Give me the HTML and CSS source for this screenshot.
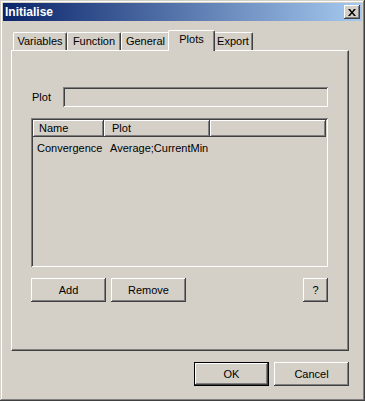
FILE: index.html
```html
<!DOCTYPE html>
<html lang="en">
<head>
  <meta charset="UTF-8" />
  <title>Initialise</title>
  <link rel="stylesheet" href="styles.css">
</head>
<body>
  <div class="window">
    <div class="titlebar">
      <span class="title">Initialise</span>
      <button class="close">
        <svg width="8" height="7" viewBox="0 0 8 7">
          <path d="M0 0h2l2 2.5L6 0h2L5 3.5 8 7H6L4 4.5 2 7H0l3-3.5z" fill="#000"/>
        </svg>
      </button>
    </div>

    <div class="tabs">
      <div class="tab tab-vars">Variables</div>
      <div class="tab tab-func">Function</div>
      <div class="tab tab-gen">General</div>
      <div class="tab tab-plots active">Plots</div>
      <div class="tab tab-export">Export</div>
    </div>

    <div class="panel">
      <div class="field-row">
        <label class="label">Plot</label>
        <div class="field"></div>
      </div>

      <div class="list">
        <div class="list-head">
          <div class="col col-name">Name</div>
          <div class="col col-plot">Plot</div>
          <div class="col col-rest"></div>
        </div>
        <div class="list-row">
          <span class="cell-name">Convergence</span>
          <span class="cell-plot">Average;CurrentMin</span>
        </div>
      </div>

      <div class="actions">
        <button class="btn">Add</button>
        <button class="btn">Remove</button>
        <button class="btn btn-help">?</button>
      </div>
    </div>

    <div class="footer">
      <button class="btn default">OK</button>
      <button class="btn">Cancel</button>
    </div>
  </div>
</body>
</html>
```

FILE: styles.css
```css
body {
  margin: 0;
  font-family: "Liberation Sans", Arial, sans-serif;
  font-size: 11px;
  color: #000;
  background-color: #d4d0c8;
}
.window {
  width: 365px;
  height: 401px;
  box-sizing: border-box;
  padding: 3px;
  background-color: #d4d0c8;
  box-shadow: inset -1px -1px #404040, inset 1px 1px #d4d0c8,
              inset -2px -2px #808080, inset 2px 2px #fff;
}
.titlebar {
  height: 18px;
  display: flex;
  align-items: center;
  justify-content: space-between;
  padding: 0 2px 0 2px;
  background: linear-gradient(to right, #0a246a, #a6caf0);
}
.title {
  color: #fff;
  font-weight: bold;
  font-size: 12px;
}
.close {
  width: 16px;
  height: 14px;
  padding: 0;
  border: none;
  background-color: #d4d0c8;
  display: flex;
  align-items: center;
  justify-content: center;
  box-shadow: inset -1px -1px #404040, inset 1px 1px #fff,
              inset -2px -2px #808080, inset 2px 2px #d4d0c8;
}
.tabs {
  display: flex;
  align-items: flex-end;
  height: 20px;
  margin: 9px 0 0 10px;
  position: relative;
  z-index: 1;
}
.tab {
  height: 17px;
  line-height: 17px;
  text-align: center;
  border-top: 1px solid #fff;
  border-left: 1px solid #fff;
  border-right: 1px solid #404040;
  border-radius: 2px 2px 0 0;
  box-shadow: inset -1px 0 #808080;
  box-sizing: content-box;
}
.tab-vars { width: 52px; }
.tab-func { width: 52px; }
.tab-gen { width: 47px; }
.tab-plots { width: 45px; }
.tab-export { width: 38px; }
.tab.active {
  height: 20px;
  line-height: 17px;
  margin: 0 -2px -1px -2px;
  background-color: #d4d0c8;
  position: relative;
}
.panel {
  margin-left: 8px;
  width: 338px;
  height: 301px;
  box-sizing: border-box;
  padding: 36px 20px 0 19px;
  border-top: 1px solid #fff;
  border-left: 1px solid #fff;
  border-right: 1px solid #404040;
  border-bottom: 1px solid #404040;
  box-shadow: inset -1px -1px #808080;
}
.field-row {
  display: flex;
  align-items: center;
}
.label {
  width: 31px;
  padding-left: 1px;
}
.field {
  flex: 1;
  height: 20px;
  box-shadow: inset 1px 1px #808080, inset -1px -1px #fff,
              inset 2px 2px #404040, inset -2px -2px #d4d0c8;
}
.list {
  margin-top: 11px;
  height: 149px;
  box-sizing: border-box;
  padding: 2px;
  box-shadow: inset 1px 1px #808080, inset -1px -1px #fff,
              inset 2px 2px #404040, inset -2px -2px #d4d0c8;
}
.list-head {
  display: flex;
  height: 17px;
}
.col {
  height: 17px;
  line-height: 17px;
  padding-left: 6px;
  box-sizing: border-box;
  box-shadow: inset -1px -1px #404040, inset 1px 1px #fff,
              inset -2px -2px #808080;
}
.col-name { width: 71px; }
.col-plot { width: 106px; padding-left: 8px; }
.col-rest { flex: 1; }
.list-row {
  display: flex;
  height: 16px;
  line-height: 16px;
  margin-top: 3px;
}
.cell-name {
  width: 71px;
  padding-left: 4px;
  box-sizing: border-box;
}
.cell-plot {
  padding-left: 6px;
}
.actions {
  display: flex;
  gap: 5px;
  margin-top: 11px;
}
.btn {
  width: 75px;
  height: 24px;
  padding: 0;
  border: none;
  font-family: "Liberation Sans", Arial, sans-serif;
  font-size: 11px;
  color: #000;
  background-color: #d4d0c8;
  box-shadow: inset -1px -1px #404040, inset 1px 1px #fff,
              inset -2px -2px #808080, inset 2px 2px #d4d0c8;
}
.btn-help {
  width: 25px;
  margin-left: auto;
}
.footer {
  display: flex;
  justify-content: flex-end;
  gap: 5px;
  width: 338px;
  margin: 11px 0 0 8px;
}
.btn.default {
  border: 1px solid #000;
  box-sizing: border-box;
}
```
